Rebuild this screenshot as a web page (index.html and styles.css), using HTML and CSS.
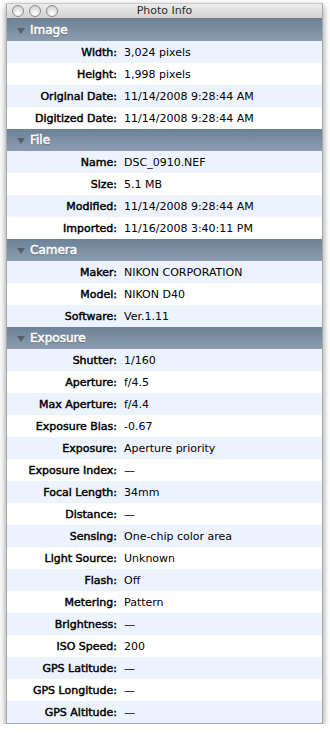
FILE: index.html
```html
<!DOCTYPE html>
<html>
<head>
<meta charset="utf-8">
<link rel="stylesheet" href="styles.css">
</head>
<body>
<div class="window">
  <div class="titlebar">
    <div class="lights"><span class="light"></span><span class="light"></span><span class="light"></span></div>
    <div class="title">Photo Info</div>
  </div>
  <div class="section"><span class="tri"></span>Image</div>
  <div class="row alt"><span class="k">Width:</span><span class="v">3,024 pixels</span></div>
  <div class="row"><span class="k">Height:</span><span class="v">1,998 pixels</span></div>
  <div class="row alt"><span class="k">Original Date:</span><span class="v">11/14/2008 9:28:44 AM</span></div>
  <div class="row"><span class="k">Digitized Date:</span><span class="v">11/14/2008 9:28:44 AM</span></div>
  <div class="section"><span class="tri"></span>File</div>
  <div class="row alt"><span class="k">Name:</span><span class="v">DSC_0910.NEF</span></div>
  <div class="row"><span class="k">Size:</span><span class="v">5.1 MB</span></div>
  <div class="row alt"><span class="k">Modified:</span><span class="v">11/14/2008 9:28:44 AM</span></div>
  <div class="row"><span class="k">Imported:</span><span class="v">11/16/2008 3:40:11 PM</span></div>
  <div class="section"><span class="tri"></span>Camera</div>
  <div class="row alt"><span class="k">Maker:</span><span class="v">NIKON CORPORATION</span></div>
  <div class="row"><span class="k">Model:</span><span class="v">NIKON D40</span></div>
  <div class="row alt"><span class="k">Software:</span><span class="v">Ver.1.11</span></div>
  <div class="section"><span class="tri"></span>Exposure</div>
  <div class="row alt"><span class="k">Shutter:</span><span class="v">1/160</span></div>
  <div class="row"><span class="k">Aperture:</span><span class="v">f/4.5</span></div>
  <div class="row alt"><span class="k">Max Aperture:</span><span class="v">f/4.4</span></div>
  <div class="row"><span class="k">Exposure Bias:</span><span class="v">-0.67</span></div>
  <div class="row alt"><span class="k">Exposure:</span><span class="v">Aperture priority</span></div>
  <div class="row"><span class="k">Exposure Index:</span><span class="v">—</span></div>
  <div class="row alt"><span class="k">Focal Length:</span><span class="v">34mm</span></div>
  <div class="row"><span class="k">Distance:</span><span class="v">—</span></div>
  <div class="row alt"><span class="k">Sensing:</span><span class="v">One-chip color area</span></div>
  <div class="row"><span class="k">Light Source:</span><span class="v">Unknown</span></div>
  <div class="row alt"><span class="k">Flash:</span><span class="v">Off</span></div>
  <div class="row"><span class="k">Metering:</span><span class="v">Pattern</span></div>
  <div class="row alt"><span class="k">Brightness:</span><span class="v">—</span></div>
  <div class="row"><span class="k">ISO Speed:</span><span class="v">200</span></div>
  <div class="row alt"><span class="k">GPS Latitude:</span><span class="v">—</span></div>
  <div class="row"><span class="k">GPS Longitude:</span><span class="v">—</span></div>
  <div class="row alt"><span class="k">GPS Altitude:</span><span class="v">—</span></div>
</div>
</body>
</html>
```
FILE: styles.css
```css
html, body {
  margin: 0;
  padding: 0;
  background: #ffffff;
}
body {
  font-family: "DejaVu Sans", "Liberation Sans", sans-serif;
  font-size: 11px;
  color: #000;
}
.window {
  margin: 3px 0 0 6px;
  width: 317px;
  border: 1px solid #a8a8a8;
  border-top-color: #c8c8c8;
  box-sizing: border-box;
  box-shadow: 0 3px 7px rgba(0,0,0,0.45);
  background: #fff;
}
.titlebar {
  height: 14px;
  background: linear-gradient(#ececec, #d2d2d2);
  border-bottom: 1px solid #7a7a7a;
  display: flex;
  align-items: center;
  position: relative;
}
.lights {
  display: flex;
  gap: 5px;
  padding-left: 5px;
}
.light {
  width: 10px;
  height: 10px;
  border-radius: 50%;
  border: 1px solid #8a8a8a;
  background: radial-gradient(circle at 50% 75%, #ffffff, #dcdcdc 65%, #c4c4c4);
}
.title {
  position: absolute;
  left: 0;
  right: 0;
  top: 0;
  text-align: center;
  line-height: 14px;
  font-size: 11px;
  color: #2a2a2a;
}
.section {
  height: 22px;
  background: linear-gradient(#6d8297, #8b9db1);
  color: #fff;
  font-size: 12px;
  -webkit-text-stroke: 0.5px #fff;
  display: flex;
  align-items: center;
  text-shadow: 0 1px 1px rgba(0,0,0,0.4);
}
.tri {
  width: 0;
  height: 0;
  border-left: 4.5px solid transparent;
  border-right: 4.5px solid transparent;
  border-top: 6px solid #56606b;
  margin: 1px 5px 0 10px;
  -webkit-text-stroke: 0;
}
.row {
  height: 22px;
  display: flex;
  align-items: center;
}
.row.alt {
  background: #edf3fe;
}
.k {
  width: 110px;
  text-align: right;
  flex: none;
  -webkit-text-stroke: 0.45px #000;
}
.v {
  padding-left: 7px;
}
```
